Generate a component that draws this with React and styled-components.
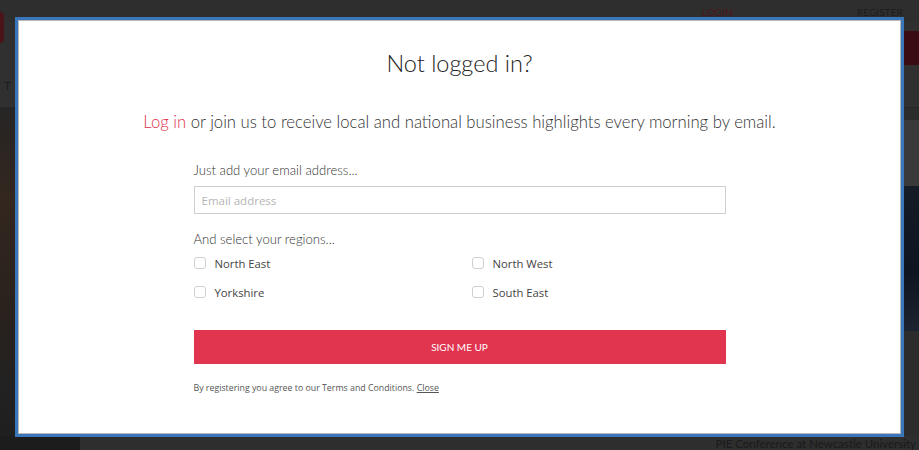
import React from "react";
import styled, { createGlobalStyle } from "styled-components";

const Global = createGlobalStyle`
  html, body { margin: 0; padding: 0; }
  body { background: #2c2c2c; width: 919px; height: 450px; overflow: hidden; font-family: "Lato", "Liberation Sans", sans-serif; }
  * { box-sizing: border-box; }
`;

const Page = styled.div`
  width: 919px;
  height: 450px;
  display: flex;
  flex-direction: column;
  background: #2c2c2c;
`;

const TopBar = styled.div`
  height: 22px;
  background: #2e2e2e;
  display: flex;
  align-items: flex-end;
  justify-content: flex-end;
  padding: 0 16px 4px 0;
  gap: 124px;
`;

const TopLink = styled.span`
  font-size: 10px;
  letter-spacing: 0.1px;
  color: ${(p) => (p.$accent ? "#4a161c" : "#1c1c1c")};
  text-transform: uppercase;
`;

const Masthead = styled.div`
  height: 86px;
  background: #303030;
  display: flex;
  justify-content: space-between;
  border-bottom: 1px solid #262626;
`;

const LogoMark = styled.div`
  width: 4px;
  height: 31px;
  margin-top: -10px;
  background: #4a1418;
  border-radius: 0 4px 4px 0;
`;

const NavStub = styled.div`
  align-self: flex-end;
  margin: 0 auto 14px 0;
  font-size: 12px;
  color: #1c1c1c;
`;

const RedTab = styled.div`
  width: 19px;
  height: 34px;
  margin-top: 9px;
  background: #3a0c12;
`;

const Body = styled.div`
  flex: 1;
  display: flex;
  justify-content: space-between;
`;

const LeftImage = styled.div`
  width: 16px;
  background: linear-gradient(180deg, #262626 0px, #2b2522 30px, #33271f 90px, #2a221d 200px, #222 280px, #1f1f1f 100%);
`;

const RightAd = styled.div`
  width: 15px;
  display: flex;
  flex-direction: column;
`;

const AdTop = styled.div`
  height: 66px;
  margin-top: 12px;
  background: #3a3a3a;
`;

const AdImage = styled.div`
  height: 145px;
  background: linear-gradient(180deg, #141c26, #0f1520 60%, #1b2430);
`;

const Footer = styled.div`
  height: 14px;
  display: flex;
  align-items: center;
  justify-content: flex-end;
  background: #2e2e2e;
`;

const FooterDark = styled.div`
  width: 80px;
  height: 100%;
  background: #1c1c1c;
  margin-right: auto;
`;

const FooterText = styled.span`
  font-size: 11.5px;
  color: #1a1a1a;
  white-space: nowrap;
  margin-right: 3px;
`;

const Modal = styled.div`
  position: fixed;
  left: 15px;
  top: 17px;
  width: 889px;
  height: 420px;
  background: #fff;
  border: 3px solid #3a76ba;
  box-shadow: inset 0 0 0 1px #b8b8b8;
  display: flex;
  flex-direction: column;
  align-items: center;
  padding-top: 28px;
`;

const Title = styled.h2`
  margin: 0;
  font-family: "Lato", sans-serif;
  font-weight: 300;
  font-size: 23.5px;
  line-height: 30px;
  color: #222;
`;

const Lead = styled.p`
  margin: 32px 0 0;
  font-family: "Lato", sans-serif;
  font-weight: 300;
  font-size: 16.7px;
  line-height: 24px;
  color: #333;
`;

const LoginLink = styled.a`
  color: #e0314f;
  text-decoration: none;
`;

const Form = styled.form`
  width: 532px;
  display: flex;
  flex-direction: column;
  margin-top: 26px;
`;

const Label = styled.div`
  font-family: "Lato", sans-serif;
  font-weight: 300;
  font-size: 13.1px;
  line-height: 20px;
  color: #333;
  margin-top: ${(p) => p.$mt || 0}px;
`;

const Input = styled.input`
  margin-top: 6px;
  height: 28px;
  width: 100%;
  border: 1px solid #cfcfcf;
  padding: 0 7px;
  font-family: "Open Sans", sans-serif;
  font-size: 11.5px;
  color: #333;
  outline: none;
  &::placeholder { color: #b5b5b5; }
`;

const Regions = styled.div`
  margin-top: 4px;
  display: grid;
  grid-template-columns: 278px 1fr;
  row-gap: 9px;
`;

const Option = styled.label`
  display: flex;
  align-items: center;
  gap: 9px;
  height: 20px;
  font-family: "Open Sans", sans-serif;
  font-size: 11.3px;
  color: #444;
`;

const Box = styled.span`
  width: 12px;
  height: 12px;
  border: 1px solid #cfcfcf;
  border-radius: 3px;
  background: #fff;
`;

const Submit = styled.button`
  margin-top: 28px;
  height: 34px;
  width: 100%;
  border: none;
  background: #e0344f;
  color: #fff;
  font-family: "Lato", sans-serif;
  font-size: 10px;
  text-transform: uppercase;
  letter-spacing: 0;
`;

const Legal = styled.div`
  margin-top: 16px;
  font-family: "Open Sans", sans-serif;
  font-size: 8.8px;
  line-height: 16px;
  color: #555;
`;

const CloseLink = styled.a`
  text-decoration: underline;
  color: #555;
`;

const regions = ["North East", "North West", "Yorkshire", "South East"];

export default function App() {
  return (
    <>
      <Global />
      <Page>
        <TopBar>
          <TopLink $accent>Login</TopLink>
          <TopLink>Register</TopLink>
        </TopBar>
        <Masthead>
          <LogoMark />
          <NavStub>T</NavStub>
          <RedTab />
        </Masthead>
        <Body>
          <LeftImage />
          <RightAd>
            <AdTop />
            <AdImage />
          </RightAd>
        </Body>
        <Footer>
          <FooterDark />
          <FooterText>PIE Conference at Newcastle University</FooterText>
        </Footer>
      </Page>
      <Modal>
        <Title>Not logged in?</Title>
        <Lead>
          <LoginLink href="#">Log in</LoginLink> or join us to receive local and national business highlights every morning by email.
        </Lead>
        <Form onSubmit={(e) => e.preventDefault()}>
          <Label>Just add your email address...</Label>
          <Input type="email" placeholder="Email address" />
          <Label $mt={15}>And select your regions...</Label>
          <Regions>
            {regions.map((r) => (
              <Option key={r}>
                <Box />
                {r}
              </Option>
            ))}
          </Regions>
          <Submit type="submit">Sign me up</Submit>
          <Legal>
            By registering you agree to our Terms and Conditions. <CloseLink href="#">Close</CloseLink>
          </Legal>
        </Form>
      </Modal>
    </>
  );
}
